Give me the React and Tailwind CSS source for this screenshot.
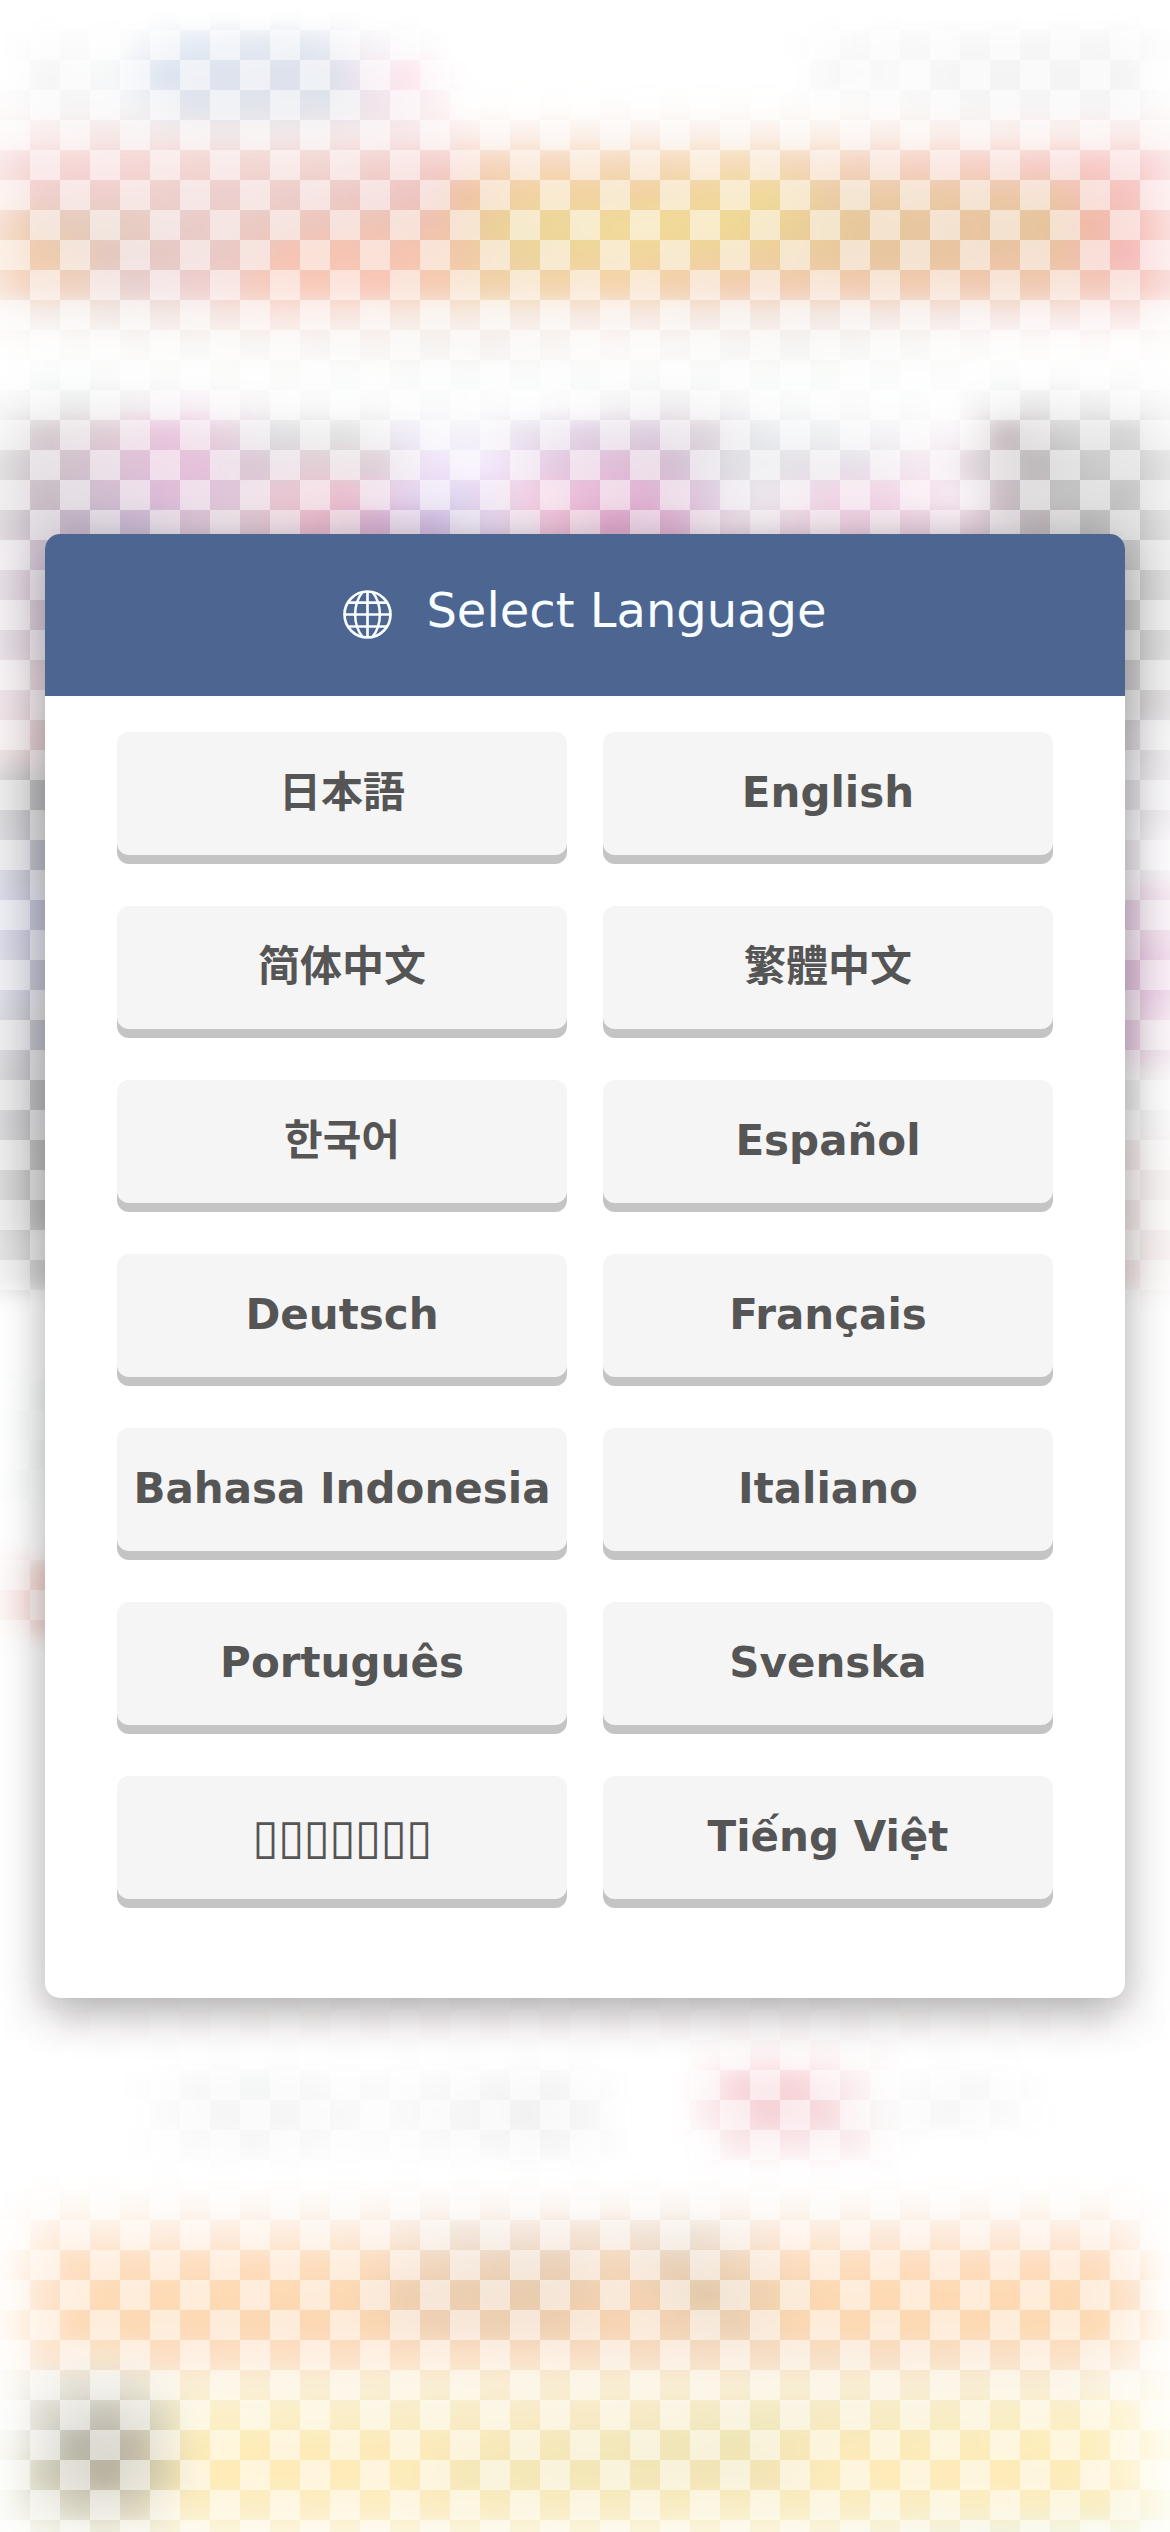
import React from "react";

const languages = [
    { code: "ja", label: "日本語" },
    { code: "en", label: "English" },
    { code: "zh-CN", label: "简体中文" },
    { code: "zh-TW", label: "繁體中文" },
    { code: "ko", label: "한국어" },
    { code: "es", label: "Español" },
    { code: "de", label: "Deutsch" },
    { code: "fr", label: "Français" },
    { code: "id", label: "Bahasa Indonesia" },
    { code: "it", label: "Italiano" },
    { code: "pt", label: "Português" },
    { code: "sv", label: "Svenska" },
    { code: "th", label: "▯▯▯▯▯▯▯", thin: true },
    { code: "vi", label: "Tiếng Việt" },
];

// horizontal strips of colour: y, height, [x, colour] stops
const strips = [
    [30, 30, [[0, "#fff"], [50, "#fafafa"], [120, "#fcfcfc"], [190, "#dfe7f2"], [310, "#dfe5ee"], [360, "#f4f0f6"], [450, "#fff"], [780, "#fff"], [860, "#f8f8f8"], [980, "#f6f6f6"], [1110, "#f4f4f4"], [1160, "#fcfcfc"]]],
    [60, 30, [[0, "#fff"], [50, "#f4f4f4"], [110, "#f6f8f8"], [160, "#d8e0ee"], [230, "#d9dfeb"], [330, "#d6dce8"], [380, "#f8e4ee"], [410, "#fde2ea"], [460, "#fff"], [790, "#fff"], [840, "#f4f4f4"], [900, "#f9f9f9"], [970, "#f2f2f2"], [1120, "#f2f2f2"], [1165, "#fdfdfd"]]],
    [90, 30, [[0, "#fdfafa"], [70, "#f4f4f4"], [130, "#f4f4f8"], [190, "#dce0ea"], [330, "#dce0e8"], [380, "#f0e2ea"], [440, "#fcf0f2"], [480, "#fffefd"], [820, "#fdfcfb"], [980, "#f5f4f4"], [1110, "#f4f3f3"], [1170, "#fdfbfb"]]],
    [120, 30, [[0, "#fbf0ef"], [100, "#f5e6e4"], [220, "#f0e6e6"], [400, "#f6e4e5"], [480, "#fbeee8"], [800, "#faeee6"], [1170, "#f9e9e7"]]],
    [150, 30, [[0, "#f4d3d3"], [100, "#f4d0ce"], [330, "#efd0ca"], [440, "#f3c6c4"], [490, "#f5d0b4"], [740, "#f3d6ac"], [860, "#f2cdb7"], [980, "#f5c9c0"], [1090, "#f5c2bf"], [1170, "#f8ced0"]]],
    [180, 30, [[0, "#f5d6cd"], [50, "#edc8c4"], [240, "#eacac7"], [420, "#eabdba"], [465, "#eebc98"], [530, "#f0ce94"], [640, "#efcc94"], [770, "#efd58d"], [830, "#e7c699"], [1050, "#eabf9c"], [1115, "#f4b8b4"], [1170, "#f7cccb"]]],
    [210, 30, [[0, "#efc8ae"], [75, "#e0c5b0"], [190, "#e6c6c4"], [320, "#ebbfb2"], [435, "#edbaa4"], [490, "#e8cb8c"], [620, "#efd78c"], [735, "#eed386"], [860, "#e3c08f"], [970, "#e6bd94"], [1040, "#e2bd8e"], [1095, "#efb09c"], [1170, "#f8c4c2"]]],
    [240, 30, [[0, "#f1c8a5"], [50, "#ecc59f"], [110, "#e0c0b8"], [230, "#e7c2bf"], [290, "#f5bba6"], [400, "#f5bca6"], [465, "#efc29c"], [525, "#eacf8e"], [640, "#efd090"], [770, "#ecca90"], [860, "#e4bf91"], [1060, "#e9bb98"], [1120, "#f4b0b0"], [1170, "#f7c3c0"]]],
    [270, 30, [[0, "#f3ceb8"], [75, "#eeccb8"], [130, "#e4caca"], [200, "#eccaca"], [270, "#f7c4b2"], [390, "#f8c0ae"], [490, "#efcda0"], [610, "#f4cfa2"], [740, "#f1c6a6"], [1040, "#eec2a6"], [1170, "#f7c4c0"]]],
    [300, 30, [[0, "#f8f0ec"], [120, "#efe8e3"], [280, "#f8e2dc"], [480, "#f5eae0"], [620, "#f5e6de"], [850, "#f1e6e0"], [1130, "#f8e4e3"], [1170, "#faeeee"]]],
    [330, 30, [[0, "#fffdfc"], [150, "#faf8f6"], [490, "#f5f0ee"], [600, "#fcf8f6"], [800, "#f4f2f0"], [1000, "#fdfbfa"], [1170, "#fefcfb"]]],
    [360, 30, [[0, "#fefefe"], [60, "#f8fafa"], [200, "#fbfdfb"], [470, "#f8faf9"], [780, "#f8fbf9"], [1170, "#fdfdfd"]]],
    [390, 30, [[0, "#f4f4f4"], [75, "#e9ebea"], [190, "#f8eef5"], [300, "#f8f9f8"], [550, "#fcfcfd"], [670, "#eeecee"], [760, "#f8f8f9"], [950, "#fdfdfd"], [1030, "#e6e6e6"], [1110, "#eeeeee"], [1170, "#f6f6f6"]]],
    [420, 30, [[0, "#dedede"], [45, "#cfc2c7"], [110, "#dbc6d0"], [165, "#e6bcd8"], [230, "#e2cedb"], [285, "#dadbdd"], [350, "#dedfdd"], [410, "#eee9f6"], [470, "#f3f2f8"], [580, "#dccbe0"], [650, "#d6c6d8"], [710, "#d9d0d8"], [765, "#e6eaed"], [870, "#f1f1f4"], [960, "#fbf4f8"], [1005, "#beb0b5"], [1070, "#cdcdcd"], [1125, "#cdcdcd"], [1170, "#e4e4e4"]]],
    [450, 30, [[0, "#cac7c9"], [75, "#cab8c4"], [135, "#dab8d2"], [195, "#e4b8d7"], [255, "#d3c2d0"], [315, "#dfc8d0"], [375, "#d8cad1"], [430, "#efe0f8"], [490, "#f2e7fc"], [555, "#e1c4dd"], [615, "#dcb4d3"], [675, "#ccb6cc"], [735, "#dddde2"], [855, "#e2dde5"], [930, "#f7e6f1"], [975, "#d8ced4"], [1035, "#b2adb0"], [1095, "#c4c4c4"], [1170, "#cfcfcf"]]],
    [480, 30, [[0, "#cdc7ca"], [45, "#bfb3bc"], [105, "#c9b5c9"], [165, "#dab0d2"], [225, "#dabfd4"], [285, "#e6c0cc"], [345, "#e8b7c7"], [405, "#e2cdeb"], [465, "#ded2f0"], [525, "#f0cbe0"], [585, "#e7b2d4"], [645, "#dca8cb"], [705, "#dbc4dc"], [765, "#eae5eb"], [825, "#f0cfe2"], [885, "#f1d0e4"], [960, "#f6eaf2"], [1005, "#beb0b7"], [1065, "#bababa"], [1125, "#bababa"], [1170, "#d4d4d4"]]],
    [510, 30, [[0, "#c4bcc2"], [75, "#bcaac0"], [135, "#c0afcc"], [195, "#d6bed0"], [255, "#dbc2cc"], [315, "#e7aec3"], [375, "#cda3c8"], [435, "#c7b4de"], [495, "#e2d4ee"], [555, "#edb8d0"], [615, "#d898c2"], [675, "#d8a6cb"], [735, "#e8dce6"], [855, "#eac8dc"], [960, "#e8cede"], [1035, "#b1a9ad"], [1095, "#b4b4b4"], [1170, "#cacaca"]]],
    [540, 60, [[0, "#cdbfcb"], [60, "#c8b4cc"], [585, "#d8a8cc"], [1110, "#b8b8b8"], [1170, "#c0c0c0"]]],
    [600, 60, [[0, "#cdbfcb"], [60, "#ccbccd"], [585, "#d8c8d8"], [1110, "#bababa"], [1170, "#c0c0c0"]]],
    [660, 60, [[0, "#dccad3"], [60, "#dac5ce"], [585, "#fff"], [1110, "#bab8ba"], [1170, "#c8c4c7"]]],
    [720, 45, [[0, "#dec8cc"], [60, "#d5bcc0"], [585, "#fff"], [1110, "#c5bdc5"], [1170, "#dcdadd"]]],
    [765, 60, [[0, "#b5b3b5"], [60, "#a6a4a8"], [585, "#fff"], [1110, "#cfcbd4"], [1170, "#e5dfe6"]]],
    [825, 60, [[0, "#b9b9c4"], [60, "#a8a8b8"], [585, "#fff"], [1110, "#dad4dc"], [1170, "#f4eff4"]]],
    [885, 60, [[0, "#b8b8d3"], [60, "#aeaec9"], [585, "#fff"], [1110, "#d8bcd7"], [1170, "#ead0e2"]]],
    [945, 60, [[0, "#bdbdd0"], [60, "#aeaec4"], [585, "#fff"], [1110, "#d6aed0"], [1170, "#e3bcda"]]],
    [1005, 60, [[0, "#b8b8c0"], [60, "#a9a9b7"], [585, "#fff"], [1110, "#d6b0cf"], [1170, "#ebd6e5"]]],
    [1065, 75, [[0, "#b2b0b4"], [60, "#a8a7ae"], [585, "#fff"], [1110, "#dfdfdf"], [1170, "#f6f4f4"]]],
    [1140, 90, [[0, "#b6b6b6"], [60, "#a9a9a9"], [585, "#fff"], [1110, "#e8dbda"], [1170, "#f2eae9"]]],
    [1230, 60, [[0, "#c8c8c8"], [60, "#c6c6c6"], [585, "#fff"], [1110, "#eedddd"], [1170, "#f4e8e8"]]],
    [1380, 120, [[0, "#fdfefe"], [60, "#f4f8f9"], [585, "#fff"], [1170, "#fff"]]],
    [1560, 75, [[0, "#fcf0ee"], [30, "#f6dcd8"], [60, "#f0c6c1"], [585, "#fff"], [1170, "#fff"]]],
    [1980, 60, [[0, "#fff"], [60, "#fdf9fa"], [585, "#fdf8f9"], [1110, "#fdf9fa"], [1170, "#fff"]]],
    [2040, 30, [[0, "#fff"], [680, "#fff"], [765, "#fdf0f1"], [850, "#fdf7f7"], [910, "#fff"]]],
    [2070, 30, [[120, "#fff"], [200, "#f7f7f7"], [260, "#f3f4f4"], [350, "#fafafa"], [430, "#f8f8f8"], [550, "#f3f3f3"], [630, "#fff"], [680, "#fff"], [740, "#f6d0d5"], [795, "#f6cdd2"], [850, "#faeaec"], [900, "#fdfdfd"], [960, "#f6f6f6"], [1060, "#fff"]]],
    [2100, 30, [[120, "#fff"], [210, "#f5f5f5"], [300, "#f4f4f4"], [380, "#fafafa"], [525, "#efefef"], [590, "#f4f4f4"], [630, "#fff"], [670, "#fff"], [765, "#f4ccd1"], [825, "#f5d5d9"], [880, "#faf8f8"], [960, "#f5f5f5"], [1060, "#fff"]]],
    [2130, 30, [[120, "#fff"], [250, "#f6f6f6"], [380, "#fcfcfc"], [550, "#f4f4f4"], [640, "#fff"], [690, "#fff"], [740, "#f9e6e8"], [850, "#f9eaec"], [910, "#fff"]]],
    [2190, 30, [[0, "#fff"], [60, "#fef8f3"], [460, "#fcf6f1"], [720, "#fcf6f1"], [1110, "#fef8f3"], [1170, "#fff"]]],
    [2220, 30, [[0, "#fffefd"], [60, "#feead9"], [370, "#fde8d7"], [460, "#efe1d4"], [590, "#f2dece"], [700, "#ebdfd2"], [770, "#fbe6d4"], [1100, "#fde6d5"], [1170, "#fff"]]],
    [2250, 30, [[0, "#fffcf8"], [70, "#fed9b6"], [360, "#fdd7b2"], [440, "#edcfb3"], [560, "#e5c9ad"], [615, "#f5d2b0"], [680, "#e2c8ac"], [740, "#eecfb0"], [800, "#fdd7b2"], [1100, "#fed7b4"], [1170, "#fffdfb"]]],
    [2280, 30, [[0, "#fff8f2"], [45, "#fde0c6"], [105, "#fed5aa"], [345, "#fdd2a6"], [405, "#ebc7a3"], [530, "#e5c3a0"], [640, "#f2cca6"], [705, "#ddc09c"], [765, "#eecba2"], [830, "#fdd3a6"], [1080, "#fdd3a6"], [1140, "#fbe1c9"], [1170, "#fffdfb"]]],
    [2310, 30, [[0, "#fff8f0"], [75, "#fdd4aa"], [370, "#fbd0a6"], [435, "#ecc9aa"], [555, "#ebc7a3"], [620, "#f8cea5"], [735, "#e8c9a9"], [800, "#fdd2a6"], [1100, "#fdd4a6"], [1170, "#fffaf2"]]],
    [2340, 30, [[0, "#fff9f2"], [45, "#fce3cc"], [105, "#f7e1c3"], [165, "#fddabd"], [450, "#fbdcbe"], [700, "#f3d8bc"], [1080, "#f9dcbe"], [1170, "#fffaf5"]]],
    [2370, 30, [[0, "#fdfcf6"], [75, "#dfdcd0"], [130, "#e1ded0"], [175, "#f8edcf"], [600, "#f7ebcc"], [1060, "#f7ebce"], [1170, "#fffcf5"]]],
    [2400, 30, [[0, "#fbfbf6"], [45, "#d7d4c8"], [105, "#bbb7a9"], [155, "#d4d0b8"], [195, "#fceec0"], [440, "#f7ebbe"], [600, "#f7e6bd"], [760, "#f1e6b8"], [1090, "#fbedbe"], [1170, "#fffbe9"]]],
    [2430, 30, [[0, "#f8f8f0"], [30, "#e4e2d8"], [75, "#aaa899"], [135, "#b4ac99"], [180, "#f0e2b0"], [210, "#fee9ad"], [430, "#fce6b0"], [615, "#efe4ae"], [740, "#ebe0a8"], [830, "#fae6ae"], [1090, "#fdecb2"], [1170, "#fffae4"]]],
    [2460, 30, [[0, "#f8f8ee"], [45, "#c8c4ac"], [105, "#aaa18d"], [160, "#d0c8a0"], [200, "#fee8aa"], [400, "#fee8ae"], [470, "#f2e4ac"], [760, "#f0dfaa"], [830, "#fde7ae"], [1070, "#fde7ad"], [1170, "#fffae6"]]],
    [2490, 30, [[0, "#f9faf4"], [75, "#cecab6"], [135, "#d3cbb3"], [180, "#fbecbc"], [440, "#fbe9b8"], [620, "#f6e9b9"], [1000, "#faebba"], [1110, "#f8ebb9"], [1170, "#fbfae8"]]],
    [2520, 40, [[0, "#fafbf4"], [100, "#eeecdc"], [200, "#fbf4da"], [800, "#faf3d8"], [1000, "#eef0da"], [1170, "#f6faee"]]],
];

// the strips beside the dialog sit under its shadow, so they are kept lighter
const strength = (y) => {
    if (y >= 540 && y < 1300) return 0.8;
    return y > 2200 ? 0.86 : 0.88;
};

function Backdrop() {
    return (
        <svg className="absolute inset-0 h-full w-full" viewBox="0 0 1170 2532" aria-hidden="true">
            <defs>
                <filter id="soften" x="0" y="0" width="1170" height="2532" filterUnits="userSpaceOnUse" colorInterpolationFilters="sRGB">
                    <feGaussianBlur stdDeviation="9 11" />
                </filter>
                <pattern id="checker" width="60" height="60" patternUnits="userSpaceOnUse">
                    <path d="M0 0h30v30H0zM30 30h30v30H30z" fill="#fff" fillOpacity="0.5" />
                </pattern>
                <linearGradient id="sides">
                    <stop offset="0" stopColor="#fff" stopOpacity="0.35" />
                    <stop offset="0.028" stopColor="#fff" stopOpacity="0" />
                    <stop offset="0.972" stopColor="#fff" stopOpacity="0" />
                    <stop offset="1" stopColor="#fff" stopOpacity="0.35" />
                </linearGradient>
                {strips.map(([y, , stops]) => (
                    <linearGradient key={y} id={`strip-${y}`} gradientUnits="userSpaceOnUse" x1="0" y1="0" x2="1170" y2="0">
                        {stops.map(([x, color]) => (
                            <stop key={x} offset={x / 1170} stopColor={color} />
                        ))}
                    </linearGradient>
                ))}
            </defs>
            <g filter="url(#soften)">
                <rect x="-60" y="-60" width="1290" height="2652" fill="#fff" />
                {strips.map(([y, h]) => (
                    <rect key={y} x="-60" y={y} width="1290" height={h} fill={`url(#strip-${y})`} opacity={strength(y)} />
                ))}
            </g>
            <rect width="1170" height="2532" fill="url(#sides)" />
            <rect width="1170" height="2532" fill="url(#checker)" />
        </svg>
    );
}

function GlobeIcon() {
    return (
        <svg className="mb-[1px] h-[49px] w-[49px] shrink-0" viewBox="0 0 49 49" fill="none" stroke="currentColor" strokeWidth="2.7">
            <circle cx="24.5" cy="24.5" r="23" />
            <path d="M20 1.500C9.500 14 9.500 35 20 47.500M29 1.500c10.500 12.500 10.500 33.500 0 46" strokeWidth="2.500" />
            <path d="M24.500 1v47M1 24.500h47M4.500 12.700h40M4.500 36.500h40" />
        </svg>
    );
}

export default function App() {
    return (
        <div className="relative flex h-[2532px] w-[1170px] items-center justify-center overflow-hidden bg-white font-['DejaVu_Sans','Noto_Sans_CJK_JP',sans-serif]">
            <Backdrop />
            <div className="relative h-[1464px] w-[1080px] rounded-[15px] bg-white shadow-[0_12px_45px_rgba(0,0,0,0.34)]">
                <div className="flex h-[162px] items-center justify-center gap-[34px] rounded-t-[15px] bg-[#4c6591] text-[#f8fdff]">
                    <GlobeIcon />
                    <h1 className="pb-[10px] text-[48px] leading-[56px]">Select Language</h1>
                </div>
                <div className="grid grid-cols-2 gap-x-[36px] gap-y-[51px] px-[72px] pt-[36px]">
                    {languages.map(({ code, label, thin }) => (
                        <button
                            key={code}
                            lang={code}
                            className={`h-[123px] cursor-pointer whitespace-nowrap rounded-[12px] bg-[#f5f5f5] text-[#555] shadow-[0_9px_0_#c4c4c4] ${thin ? "pb-[4px] text-[48px] font-normal tracking-[-0.8px]" : "pb-[2px] text-[42px] font-bold"}`}
                        >
                            {label}
                        </button>
                    ))}
                </div>
            </div>
        </div>
    );
}
